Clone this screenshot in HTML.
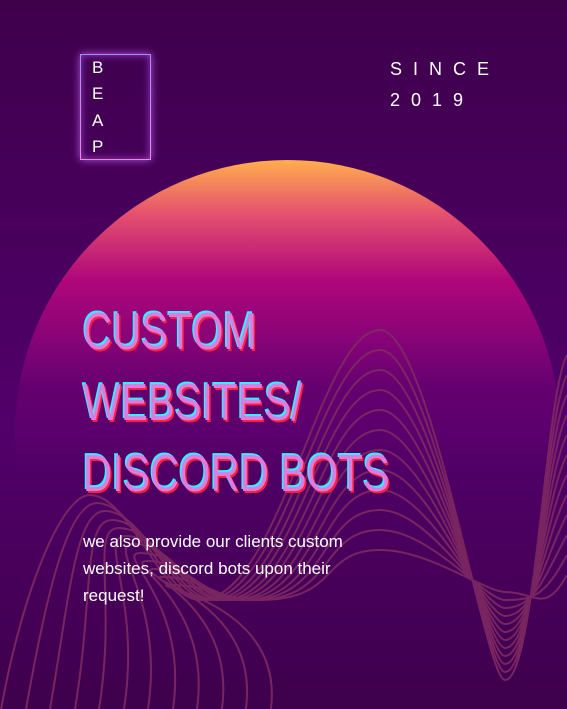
<!DOCTYPE html>
<html><head><meta charset="utf-8"><style>
html,body{margin:0;padding:0}
body{width:567px;height:709px;overflow:hidden;position:relative;background:linear-gradient(180deg,#3f004c 0%,#4a0060 40%,#52006a 60%,#3e004c 100%);font-family:"Liberation Sans",sans-serif}
.sun{position:absolute;left:15px;top:160px;width:545px;height:545px;border-radius:50%;background:linear-gradient(180deg,#ffae4e 0%,#e4506e 10%,#b0067a 22%,#8a0478 32%,#64006f 42%,rgba(80,0,106,0) 58%)}
.box{position:absolute;left:80px;top:54px;width:69px;height:104px;border:1.5px solid #c7a3e8;box-shadow:0 0 8px #b255e0,inset 0 0 8px #9a3bd0;border-image:linear-gradient(180deg,#9d8df0,#e88ad0) 1}
.box span{position:absolute;left:11px;color:#fff;font-size:17px}
.since{position:absolute;left:390px;color:#fff;font-size:18px;letter-spacing:11px}
.h{position:absolute;left:83px;font-size:52px;color:#e07ae0;text-shadow:-2px -2px 0 #2ff2ff,2px 2px 0 #ff1e3c;line-height:1;transform:scaleX(0.775);transform-origin:0 0;white-space:nowrap}
.p{position:absolute;left:83px;top:528px;color:#fff;font-size:17px;line-height:27px;width:275px}
svg{position:absolute;left:0;top:0}
</style></head><body>
<div class="sun"></div>
<svg width="567" height="709" fill="none" stroke="#7f2a62" stroke-width="2" opacity="0.9">
<path d="M0 715C20 600 60 495 90 495C130 495 160 600 200 600C280 600 320 330 380 330C430 330 485 680 505 680C535 680 545 395 567 355"/>
<path d="M25 715C45 600 67 503 97 503C137 503 165 600 205 600C285 600 320 350 380 350C430 350 485 672 505 672C535 672 545 415 567 375"/>
<path d="M49 715C69 600 75 511 105 511C145 511 171 600 211 600C291 600 320 370 380 370C430 370 485 664 505 664C535 664 545 435 567 395"/>
<path d="M74 715C94 600 82 520 112 520C152 520 176 600 216 600C296 600 320 390 380 390C430 390 485 656 505 656C535 656 545 455 567 415"/>
<path d="M98 715C118 600 89 528 119 528C159 528 182 600 222 600C302 600 320 410 380 410C430 410 485 648 505 648C535 648 545 475 567 435"/>
<path d="M123 715C143 600 96 536 126 536C166 536 187 600 227 600C307 600 320 430 380 430C430 430 485 640 505 640C535 640 545 495 567 455"/>
<path d="M147 715C167 600 104 544 134 544C174 544 193 600 233 600C313 600 320 450 380 450C430 450 485 632 505 632C535 632 545 515 567 475"/>
<path d="M172 715C192 600 111 553 141 553C181 553 198 600 238 600C318 600 320 470 380 470C430 470 485 624 505 624C535 624 545 535 567 495"/>
<path d="M196 715C216 600 118 561 148 561C188 561 204 600 244 600C324 600 320 490 380 490C430 490 485 616 505 616C535 616 545 555 567 515"/>
<path d="M221 715C241 600 125 569 155 569C195 569 209 600 249 600C329 600 320 510 380 510C430 510 485 608 505 608C535 608 545 575 567 535"/>
<path d="M245 715C265 600 133 577 163 577C203 577 215 600 255 600C335 600 320 530 380 530C430 530 485 600 505 600C535 600 545 595 567 555"/>
<path d="M270 715C290 600 140 585 170 585C210 585 220 600 260 600C340 600 320 550 380 550C430 550 485 592 505 592C535 592 545 615 567 575"/>
</svg>
<div class="box"><span style="top:3px">B</span><span style="top:29px">E</span><span style="top:56px">A</span><span style="top:82px">P</span></div>
<div class="since" style="top:59px">SINCE</div>
<div class="since" style="top:90px">2019</div>
<div class="h" style="top:306px">CUSTOM</div>
<div class="h" style="top:377px">WEBSITES/</div>
<div class="h" style="top:448px">DISCORD BOTS</div>
<div class="p">we also provide our clients custom websites, discord bots upon their request!</div>
</body></html>
